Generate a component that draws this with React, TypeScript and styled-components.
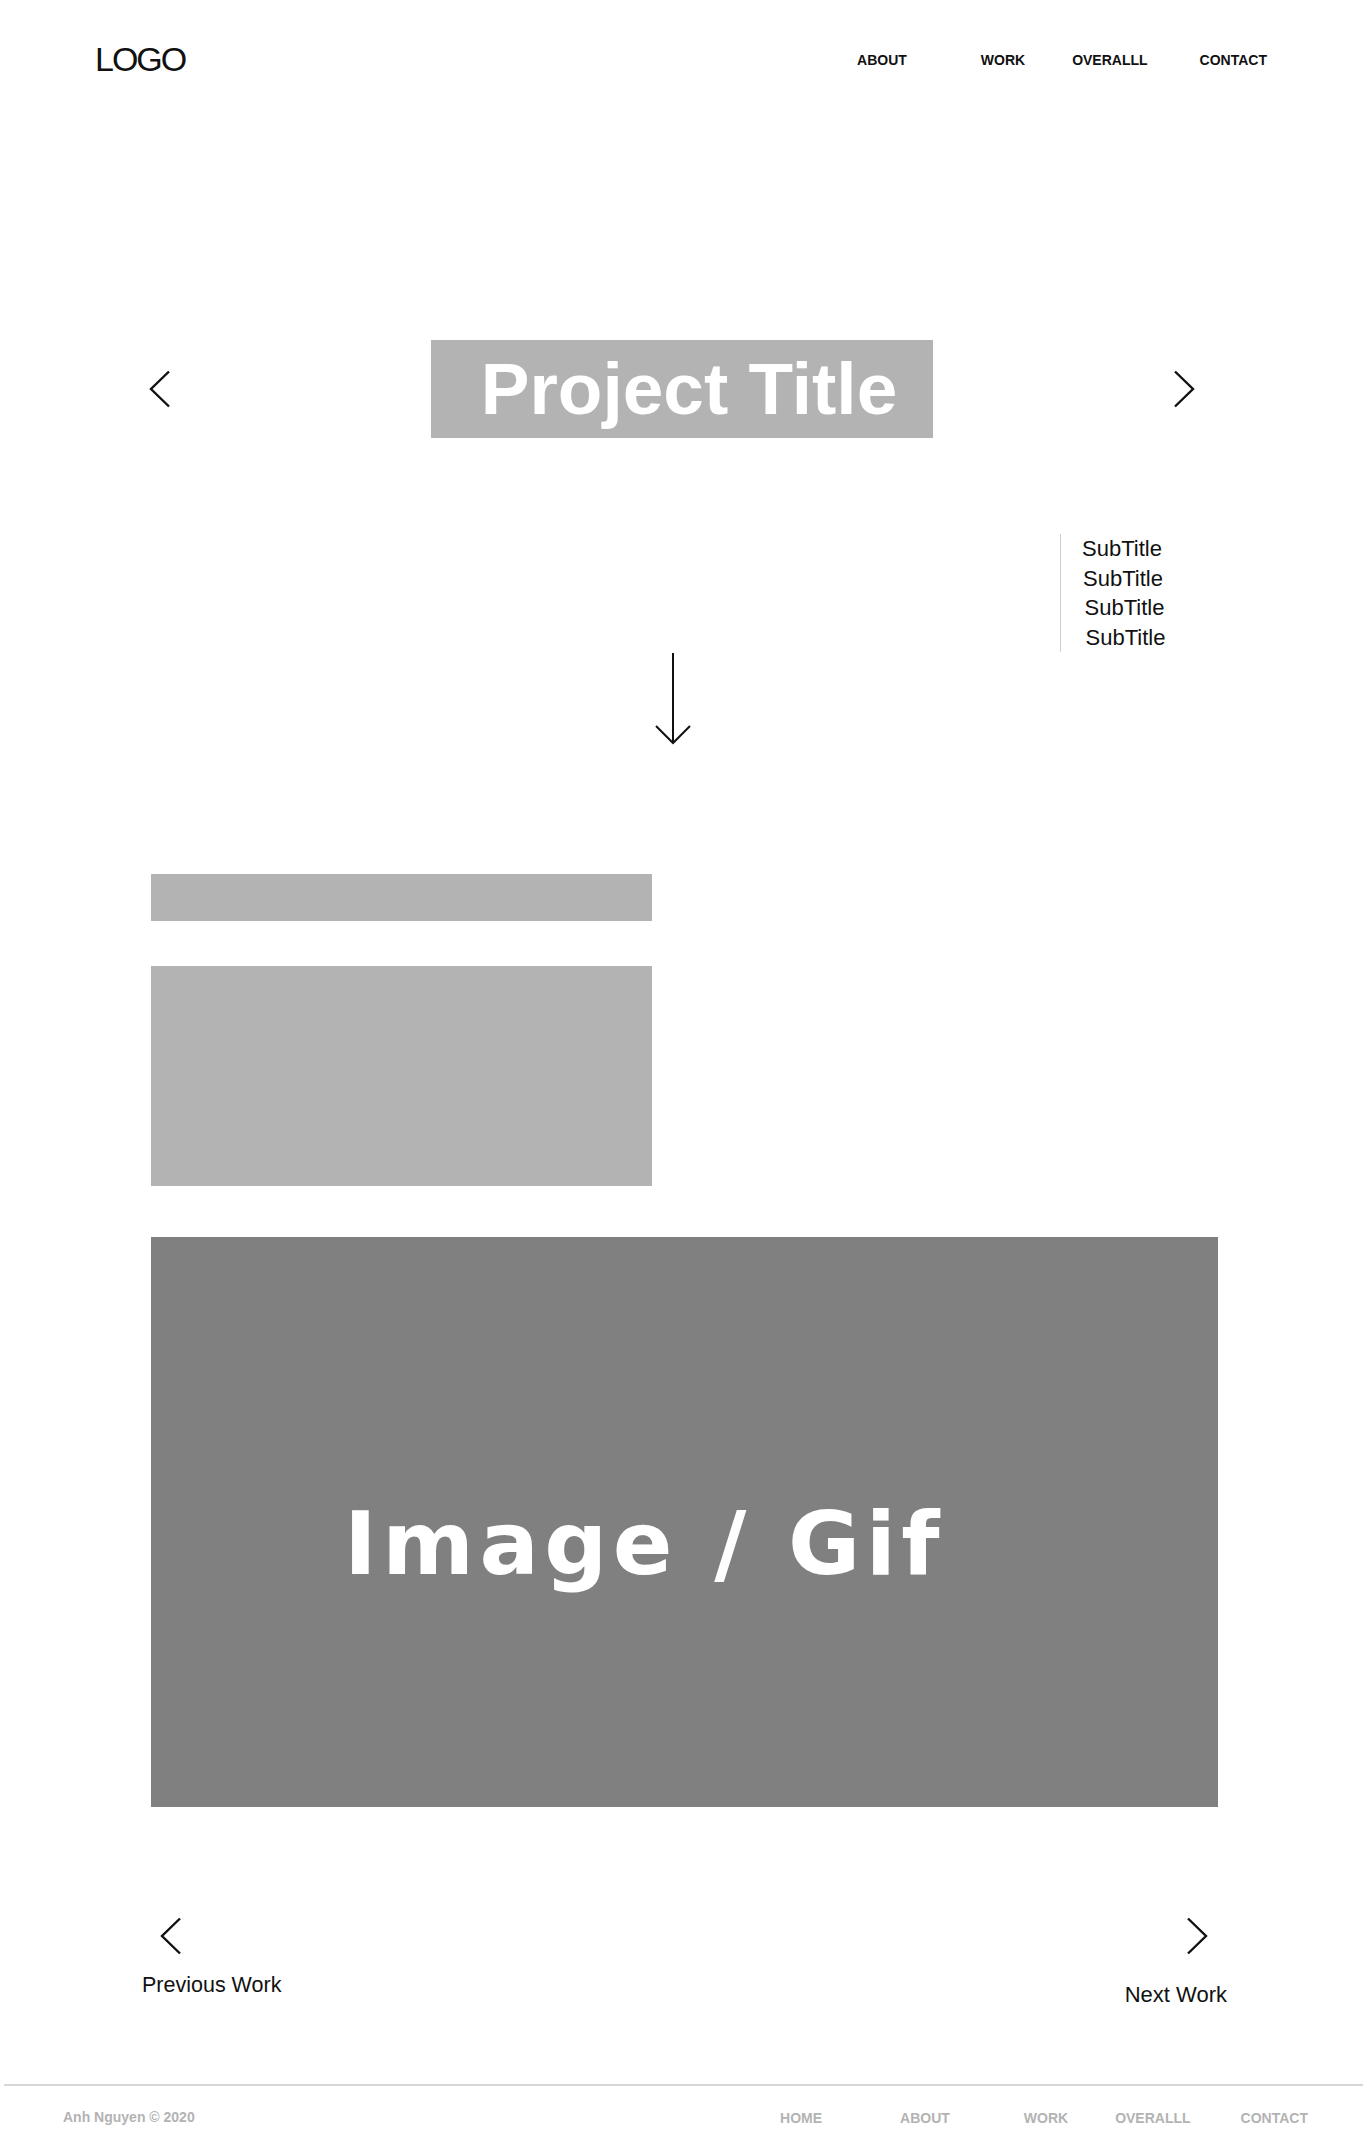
import React from 'react';
import styled, { createGlobalStyle } from 'styled-components';

const GlobalStyle = createGlobalStyle`
  html, body {
    margin: 0;
    padding: 0;
    background: #fff;
  }
  body {
    font-family: 'Liberation Sans', Arial, sans-serif;
    color: #111;
  }
`;

const Page = styled.div`
  width: 1366px;
  min-height: 2153px;
  display: flex;
  flex-direction: column;
`;

const Header = styled.header`
  height: 118px;
  display: flex;
  align-items: center;
  justify-content: space-between;
  padding: 0 99px 0 95px;
`;

const Logo = styled.div`
  font: 400 34px/1 'Liberation Sans', Arial, sans-serif;
  letter-spacing: -2px;
  color: #111;
`;

const Nav = styled.nav`
  display: flex;
  align-items: center;
  padding-top: 1px;
`;

const NavLink = styled.a<{ $gap: number; $muted?: boolean }>`
  margin-left: ${(p) => p.$gap}px;
  font: 700 14px/1 'Liberation Sans', Arial, sans-serif;
  color: ${(p) => (p.$muted ? '#b3b3b3' : '#111')};
  text-decoration: none;
  white-space: nowrap;
`;

const Hero = styled.section`
  margin-top: 222px;
  height: 98px;
  display: flex;
  align-items: center;
  padding-left: 148px;
`;

const TitleBox = styled.h1`
  margin: 0 239px 0 259px;
  width: 502px;
  height: 98px;
  background: #b3b3b3;
  color: #fff;
  font: 700 73px/98px 'Liberation Sans', Arial, sans-serif;
  text-align: center;
  padding-left: 14px;
  box-sizing: border-box;
  white-space: nowrap;
`;

const SubRow = styled.div`
  margin-top: 96px;
  padding-left: 1060px;
`;

const SubList = styled.ul`
  margin: 0;
  padding: 0;
  list-style: none;
  border-left: 1.5px solid #cfcfcf;
  width: 120px;
`;

const SubItem = styled.li<{ $shift: number }>`
  padding-left: ${(p) => 21 + p.$shift}px;
  font: 400 22px/29.5px 'Liberation Sans', Arial, sans-serif;
  color: #111;
`;

const ArrowRow = styled.div`
  margin-top: 1px;
  padding-left: 655px;
  height: 92px;
`;

const Block = styled.div<{ $h: number; $mt: number }>`
  margin: ${(p) => p.$mt}px 0 0 151px;
  width: 501px;
  height: ${(p) => p.$h}px;
  background: #b3b3b3;
`;

const Media = styled.div`
  margin: 51px 0 0 151px;
  width: 1067px;
  height: 570px;
  background: #808080;
  box-sizing: border-box;
  padding: 263px 0 0 193px;
`;

const MediaLabel = styled.div`
  font: 700 88px/88px 'DejaVu Sans', 'Liberation Sans', sans-serif;
  letter-spacing: 5.5px;
  color: #fff;
  white-space: nowrap;
`;

const Pager = styled.div`
  margin-top: 110px;
  display: flex;
  justify-content: space-between;
  padding: 0 139px 0 142px;
`;

const PagerItem = styled.a<{ $end?: boolean }>`
  display: flex;
  flex-direction: column;
  align-items: ${(p) => (p.$end ? 'flex-end' : 'flex-start')};
  text-decoration: none;
  color: #111;
`;

const PagerIcon = styled.span<{ $end?: boolean }>`
  display: block;
  height: 36px;
  margin: ${(p) => (p.$end ? '0 18px 0 0' : '0 0 0 17px')};
`;

const PagerLabel = styled.span<{ $mt: number; $size: number }>`
  margin-top: ${(p) => p.$mt}px;
  font: 400 ${(p) => p.$size}px/24px 'Liberation Sans', Arial, sans-serif;
  white-space: nowrap;
`;

const Footer = styled.footer`
  margin: 77px 3px 0 4px;
  border-top: 2px solid #d6d6d6;
  height: 70px;
  display: flex;
  align-items: center;
  justify-content: space-between;
  padding: 0 55px 6px 59px;
  box-sizing: border-box;
`;

const Copy = styled.div`
  font: 700 14px/1 'Liberation Sans', Arial, sans-serif;
  color: #b3b3b3;
`;

const Chevron = ({ dir }: { dir: 'left' | 'right' }) => (
  <svg width="24" height="38" viewBox="0 0 24 38" fill="none">
    <polyline
      points={dir === 'left' ? '21,1.5 3,19 21,36.5' : '3,1.5 21,19 3,36.5'}
      stroke="#111"
      strokeWidth="2.4"
    />
  </svg>
);

const DownArrow = () => (
  <svg width="36" height="92" viewBox="0 0 36 92" fill="none">
    <line x1="18" y1="0" x2="18" y2="90" stroke="#111" strokeWidth="2" />
    <polyline points="1,73 18,90 35,73" stroke="#111" strokeWidth="2" />
  </svg>
);

const topNav = [
  { label: 'ABOUT', gap: 0 },
  { label: 'WORK', gap: 74 },
  { label: 'OVERALLL', gap: 47 },
  { label: 'CONTACT', gap: 52 },
];

const footNav = [
  { label: 'HOME', gap: 0 },
  { label: 'ABOUT', gap: 78 },
  { label: 'WORK', gap: 74 },
  { label: 'OVERALLL', gap: 47 },
  { label: 'CONTACT', gap: 50 },
];

export default function App() {
  return (
    <>
      <GlobalStyle />
      <Page>
        <Header>
          <Logo>LOGO</Logo>
          <Nav>
            {topNav.map((n) => (
              <NavLink key={n.label} $gap={n.gap}>
                {n.label}
              </NavLink>
            ))}
          </Nav>
        </Header>

        <Hero>
          <Chevron dir="left" />
          <TitleBox>Project Title</TitleBox>
          <Chevron dir="right" />
        </Hero>

        <SubRow>
          <SubList>
            {[0, 1, 2.5, 3.5].map((s, i) => (
              <SubItem key={i} $shift={s}>
                SubTitle
              </SubItem>
            ))}
          </SubList>
        </SubRow>

        <ArrowRow>
          <DownArrow />
        </ArrowRow>

        <Block $mt={129} $h={47} />
        <Block $mt={45} $h={220} />

        <Media>
          <MediaLabel>Image / Gif</MediaLabel>
        </Media>

        <Pager>
          <PagerItem>
            <PagerIcon>
              <Chevron dir="left" />
            </PagerIcon>
            <PagerLabel $mt={20} $size={21.5}>Previous Work</PagerLabel>
          </PagerItem>
          <PagerItem $end>
            <PagerIcon $end>
              <Chevron dir="right" />
            </PagerIcon>
            <PagerLabel $mt={30} $size={22}>Next Work</PagerLabel>
          </PagerItem>
        </Pager>

        <Footer>
          <Copy>Anh Nguyen © 2020</Copy>
          <Nav>
            {footNav.map((n) => (
              <NavLink key={n.label} $gap={n.gap} $muted>
                {n.label}
              </NavLink>
            ))}
          </Nav>
        </Footer>
      </Page>
    </>
  );
}
